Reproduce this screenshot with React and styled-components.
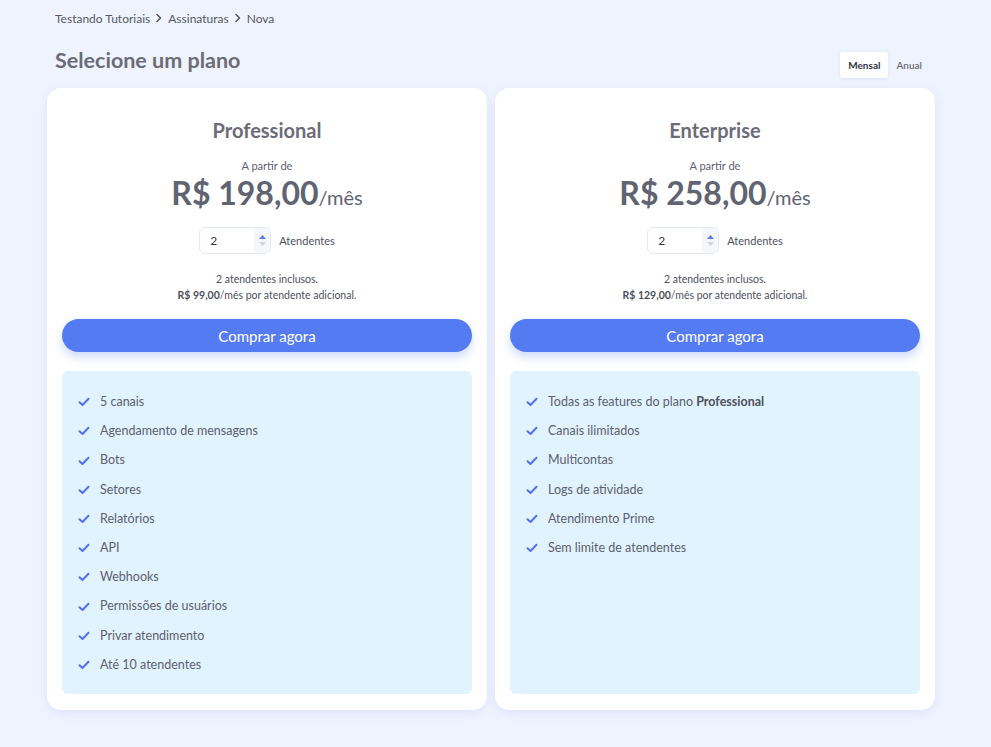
import styled, { createGlobalStyle } from "styled-components";

const GlobalStyle = createGlobalStyle`
  html, body {
    margin: 0;
    padding: 0;
    background: #eff3fe;
  }
  body {
    font-family: "Lato", "Liberation Sans", sans-serif;
    color: #6b6c78;
  }
  * { box-sizing: border-box; }
`;

const plans = [
  {
    name: "Professional",
    price: "R$ 198,00",
    extra: "R$ 99,00",
    features: [
      "5 canais",
      "Agendamento de mensagens",
      "Bots",
      "Setores",
      "Relatórios",
      "API",
      "Webhooks",
      "Permissões de usuários",
      "Privar atendimento",
      "Até 10 atendentes",
    ],
  },
  {
    name: "Enterprise",
    price: "R$ 258,00",
    extra: "R$ 129,00",
    features: [
      <>Todas as features do plano <b>Professional</b></>,
      "Canais ilimitados",
      "Multicontas",
      "Logs de atividade",
      "Atendimento Prime",
      "Sem limite de atendentes",
    ],
  },
];

export default function App() {
  return (
    <>
      <GlobalStyle />
      <Page>
        <Breadcrumb>
          <span>Testando Tutoriais</span>
          <Chevron />
          <span>Assinaturas</span>
          <Chevron />
          <span>Nova</span>
        </Breadcrumb>
        <Header>
          <Title>Selecione um plano</Title>
          <Toggle>
            <ToggleButton $active>Mensal</ToggleButton>
            <ToggleButton>Anual</ToggleButton>
          </Toggle>
        </Header>
        <Cards>
          {plans.map((p) => (
            <Card key={p.name}>
              <PlanName>{p.name}</PlanName>
              <FromLabel>A partir de</FromLabel>
              <Price>
                {p.price}
                <small>/mês</small>
              </Price>
              <SeatsRow>
                <NumberBox>
                  <span>2</span>
                  <Spinner>
                    <svg width="7" height="4" viewBox="0 0 7 4"><path d="M0 4L3.5 0L7 4Z" fill="#5b7cf3" /></svg>
                    <svg width="7" height="4" viewBox="0 0 7 4"><path d="M0 0L3.5 4L7 0Z" fill="#cdd3e0" /></svg>
                  </Spinner>
                </NumberBox>
                <SeatsLabel>Atendentes</SeatsLabel>
              </SeatsRow>
              <Included>
                2 atendentes inclusos.
                <br />
                <b>{p.extra}</b>/mês por atendente adicional.
              </Included>
              <BuyButton>Comprar agora</BuyButton>
              <Features>
                {p.features.map((f, i) => (
                  <Feature key={i}>
                    <Check />
                    <span>{f}</span>
                  </Feature>
                ))}
              </Features>
            </Card>
          ))}
        </Cards>
      </Page>
    </>
  );
}

function Chevron() {
  return (
    <svg width="8" height="10" viewBox="0 0 8 10" fill="none">
      <path d="M2 1.5L5.5 5L2 8.5" stroke="#555" strokeWidth="1.5" strokeLinecap="round" strokeLinejoin="round" />
    </svg>
  );
}

function Check() {
  return (
    <CheckIcon width="12" height="10" viewBox="0 0 12 10" fill="none">
      <path d="M1.5 5.2L4.5 8L10.5 1.8" stroke="#5470ee" strokeWidth="2" strokeLinecap="round" strokeLinejoin="round" />
    </CheckIcon>
  );
}

const Page = styled.div`
  padding: 10px 57px 36px 47px;
`;

const Breadcrumb = styled.div`
  display: flex;
  align-items: center;
  gap: 5px;
  padding-left: 8px;
  font-size: 12px;
  color: #555863;
  height: 16px;
`;

const Header = styled.div`
  display: flex;
  align-items: flex-start;
  justify-content: space-between;
  padding: 0 0 10px 8px;
  margin-top: 21px;
`;

const Title = styled.h1`
  margin: 0;
  font-size: 21.5px;
  font-weight: 700;
  color: #6b6c78;
  line-height: 26px;
`;

const Toggle = styled.div`
  display: flex;
  align-items: center;
  margin-right: 4px;
  margin-top: 5px;
`;

const ToggleButton = styled.div`
  height: 26px;
  display: flex;
  align-items: center;
  font-size: 10px;
  font-weight: ${(p) => (p.$active ? 700 : 600)};
  color: ${(p) => (p.$active ? "#333545" : "#6b6c78")};
  background: ${(p) => (p.$active ? "#fff" : "transparent")};
  border-radius: 3px;
  padding: 0 8px;
  box-shadow: ${(p) => (p.$active ? "0 1px 3px rgba(120,130,180,0.15)" : "none")};
`;

const Cards = styled.div`
  display: grid;
  grid-template-columns: 440px 440px;
  gap: 8px;
`;

const Card = styled.div`
  background: #fff;
  border-radius: 14px;
  box-shadow: 0 3px 10px rgba(110, 130, 240, 0.14);
  padding: 29px 15px 16px;
  display: flex;
  flex-direction: column;
  align-items: center;
`;

const PlanName = styled.h2`
  margin: 0;
  font-size: 20px;
  font-weight: 700;
  color: #6b6c78;
  line-height: 26px;
`;

const FromLabel = styled.div`
  margin-top: 16px;
  font-size: 11px;
  color: #5d6070;
  line-height: 14px;
`;

const Price = styled.div`
  font-size: 32px;
  font-weight: 700;
  color: #5f6372;
  line-height: 39px;
  small {
    font-size: 20px;
    font-weight: 400;
  }
`;

const SeatsRow = styled.div`
  display: flex;
  align-items: center;
  gap: 8px;
  margin-top: 10px;
`;

const NumberBox = styled.div`
  width: 72px;
  height: 27px;
  border: 1px solid #e3e8fb;
  border-radius: 6px;
  display: flex;
  align-items: center;
  justify-content: space-between;
  padding: 0 0 0 10px;
  font-size: 12px;
  color: #333545;
  overflow: hidden;
`;

const Spinner = styled.div`
  width: 16px;
  height: 100%;
  background: #f6f7fb;
  display: flex;
  flex-direction: column;
  align-items: center;
  justify-content: center;
  gap: 3px;
`;

const SeatsLabel = styled.span`
  font-size: 11px;
  color: #4d5060;
`;

const Included = styled.div`
  margin-top: 17px;
  font-size: 10.5px;
  line-height: 16px;
  text-align: center;
  color: #4d5060;
  b { font-weight: 700; }
`;

const BuyButton = styled.button`
  flex: none;
  margin-top: 16px;
  width: 100%;
  height: 33px;
  border: none;
  border-radius: 17px;
  background: #557bf3;
  color: #fff;
  font-family: inherit;
  font-size: 15px;
  box-shadow: 0 5px 10px rgba(85, 123, 243, 0.28);
  cursor: pointer;
`;

const Features = styled.ul`
  list-style: none;
  margin: 19px 0 0;
  padding: 23px 16px 21px;
  width: 100%;
  flex: 1;
  background: #e1f3fe;
  border-radius: 6px;
  display: flex;
  flex-direction: column;
  gap: 12.8px;
`;

const Feature = styled.li`
  display: flex;
  align-items: center;
  gap: 10px;
  font-size: 12.5px;
  line-height: 16.4px;
  color: #5d6070;
  b { font-weight: 700; color: #4d5060; }
`;

const CheckIcon = styled.svg`
  flex: none;
`;
